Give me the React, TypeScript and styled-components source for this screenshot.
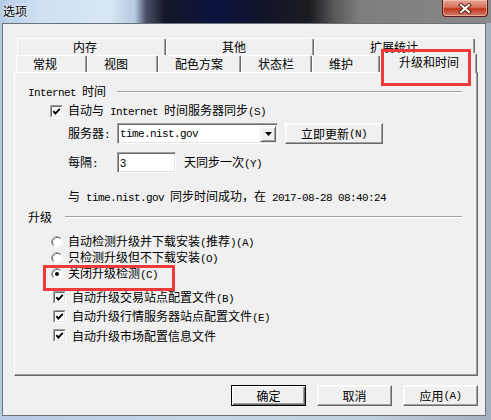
import styled, { createGlobalStyle } from "styled-components";

const GlobalStyle = createGlobalStyle`
  html, body {
    margin: 0;
    padding: 0;
    background: #ffffff;
  }
  body {
    font-family: "Noto Sans CJK SC", "Noto Sans", sans-serif;
    font-size: 12px;
    color: #000000;
  }
`;

const Frame = styled.div`
  width: 491px;
  height: 420px;
  box-sizing: border-box;
  display: flex;
  flex-direction: column;
  overflow: hidden;
  background: linear-gradient(90deg, #b6cbe3 0%, #c6d6e8 40%, #c2cfdc 75%, #a4b0bd 100%);
`;

const TitleBar = styled.div`
  height: 23px;
  flex: none;
  display: flex;
  align-items: flex-start;
  padding-left: 3px;
  background: linear-gradient(
    90deg,
    #b4cce6 0px,
    #cfe0f2 40px,
    #d9e6f4 110px,
    #b5c9e0 135px,
    #4a5068 146px,
    #141826 165px,
    #0d1240 215px,
    #10142a 260px,
    #1c1c22 310px,
    #5a5a5a 335px,
    #7d7d7d 360px,
    #8a8a8a 491px
  );
`;

const Title = styled.div`
  margin-top: 4px;
  line-height: 14px;
  font-size: 12px;
  text-shadow: 0 0 4px #ffffff, 0 0 2px #ffffff;
`;

const CloseButton = styled.div`
  margin-left: auto;
  margin-right: 3px;
  width: 46px;
  height: 17px;
  box-sizing: border-box;
  border: 1px solid #5a1c14;
  border-top: none;
  border-radius: 0 0 4px 4px;
  background: linear-gradient(180deg, #e8a494 0%, #d5725c 45%, #c0381f 55%, #d4806a 100%);
  box-shadow: inset 0 0 0 1px rgba(255, 220, 210, 0.45);
  display: flex;
  align-items: center;
  justify-content: center;
`;

const Client = styled.div`
  flex: 1;
  margin: 0 5px 4px 2px;
  display: flex;
  flex-direction: column;
  background: #f0f0f0;
  border: 1px solid #6a737c;
  padding: 14px 7px 0 11px;
`;

const TabStrip = styled.div`
  display: flex;
  flex-direction: column;
  height: 34px;
`;

const TabRow = styled.div<{ $indent: number }>`
  display: flex;
  align-items: flex-end;
  height: 17px;
  padding-left: ${(p) => p.$indent}px;
`;

const Tab = styled.div<{ $w: number; $pad: number; $active?: boolean }>`
  position: relative;
  width: ${(p) => p.$w}px;
  height: ${(p) => (p.$active ? 20 : 17)}px;
  margin-bottom: ${(p) => (p.$active ? -1 : 0)}px;
  z-index: ${(p) => (p.$active ? 2 : 0)};
  box-sizing: border-box;
  padding-left: ${(p) => p.$pad}px;
  background: #f0f0f0;
  border-top: 1px solid #ffffff;
  border-left: 1px solid #ffffff;
  border-right: 1px solid #696969;
  border-radius: 2px 2px 0 0;
  box-shadow: inset -1px 0 #a0a0a0;
  line-height: 15px;
  white-space: nowrap;
  flex: none;
`;

const Mark = styled.div<{ $l: number; $t: number; $w: number; $h: number }>`
  position: absolute;
  left: ${(p) => p.$l}px;
  top: ${(p) => p.$t}px;
  width: ${(p) => p.$w}px;
  height: ${(p) => p.$h}px;
  box-sizing: border-box;
  border: 3px solid #ef3a3a;
  pointer-events: none;
  z-index: 5;
`;

const Panel = styled.div`
  height: 304px;
  box-sizing: border-box;
  padding: 12px 15px 0 13px;
  border: 1px solid;
  border-color: #ffffff #696969 #696969 #ffffff;
  box-shadow: inset -1px -1px #a0a0a0;
  display: flex;
  flex-direction: column;
`;

const GroupHeader = styled.div<{ $gap: number; $mt?: number }>`
  display: flex;
  align-items: center;
  height: 14px;
  gap: ${(p) => p.$gap}px;
  margin-top: ${(p) => p.$mt ?? 0}px;
  line-height: 14px;
`;

const Rule = styled.div`
  flex: 1;
  height: 0;
  border-top: 1px solid #a0a0a0;
  border-bottom: 1px solid #ffffff;
`;

const Mono = styled.span`
  font-family: "Liberation Mono", "DejaVu Sans Mono", monospace;
  font-size: 11px;
  letter-spacing: -0.6px;
  white-space: pre;
`;

const Section = styled.div<{ $ml: number; $mt: number }>`
  display: flex;
  flex-direction: column;
  margin-left: ${(p) => p.$ml}px;
  margin-top: ${(p) => p.$mt}px;
`;

const OptionRow = styled.div<{ $h: number; $gap: number; $mt?: number }>`
  position: relative;
  display: flex;
  align-items: center;
  height: ${(p) => p.$h}px;
  gap: ${(p) => p.$gap}px;
  margin-top: ${(p) => p.$mt ?? 0}px;
  line-height: 14px;
  white-space: nowrap;
`;

const FieldRow = styled.div<{ $mt: number }>`
  display: flex;
  align-items: center;
  height: 21px;
  margin-top: ${(p) => p.$mt}px;
  line-height: 14px;
  white-space: nowrap;
`;

const FieldLabel = styled.div`
  width: 49px;
  flex: none;
`;

const Sunken = styled.div<{ $w: number }>`
  width: ${(p) => p.$w}px;
  height: 21px;
  box-sizing: border-box;
  flex: none;
  display: flex;
  align-items: center;
  padding-left: 2px;
  background: #ffffff;
  border: 1px solid;
  border-color: #a0a0a0 #ffffff #ffffff #a0a0a0;
  box-shadow: inset 1px 1px #696969, inset -1px -1px #e3e3e3;
`;

const DropButton = styled.div`
  margin-left: auto;
  margin-right: 1px;
  width: 16px;
  height: 16px;
  box-sizing: border-box;
  background: #f0f0f0;
  border: 1px solid;
  border-color: #f0f0f0 #696969 #696969 #f0f0f0;
  box-shadow: inset 1px 1px #ffffff, inset -1px -1px #a0a0a0;
  display: flex;
  align-items: center;
  justify-content: center;
`;

const Button = styled.div<{ $w: number; $ml?: number; $default?: boolean }>`
  width: ${(p) => p.$w}px;
  height: 21px;
  margin-left: ${(p) => p.$ml ?? 0}px;
  box-sizing: border-box;
  flex: none;
  display: flex;
  align-items: center;
  justify-content: center;
  background: #f0f0f0;
  border: 1px solid;
  border-color: ${(p) =>
    p.$default ? "#000000" : "#ffffff #696969 #696969 #ffffff"};
  box-shadow: ${(p) =>
    p.$default
      ? "inset 1px 1px #ffffff, inset -1px -1px #696969, inset -2px -2px #a0a0a0"
      : "inset -1px -1px #a0a0a0, inset 1px 1px #f8f8f8"};
  line-height: 14px;
  white-space: nowrap;
`;

const ButtonRow = styled.div`
  display: flex;
  justify-content: flex-end;
  gap: 11px;
  margin-top: 9px;
`;

const CheckBox = () => (
  <svg width="13" height="13" viewBox="0 0 13 13" style={{ flex: "none" }}>
    <rect x="0" y="0" width="13" height="13" fill="#ffffff" />
    <path d="M0.5 12.5 V0.5 H12.5" fill="none" stroke="#a0a0a0" />
    <path d="M1.5 11.5 V1.5 H11.5" fill="none" stroke="#696969" />
    <path d="M1 12.5 H12.5 V1" fill="none" stroke="#ffffff" />
    <path d="M2 11.5 H11.5 V2" fill="none" stroke="#e3e3e3" />
    <path d="M3.3 6.2 L5.4 8.5 L9.8 3.9" fill="none" stroke="#000000" strokeWidth="1.9" />
  </svg>
);

const Radio = ({ on }: { on?: boolean }) => (
  <svg width="12" height="12" viewBox="0 0 12 12" style={{ flex: "none" }}>
    <circle cx="6" cy="6" r="5.5" fill="#ffffff" stroke="#f4f4f4" />
    <path d="M2.11 9.89 A5.5 5.5 0 0 1 9.89 2.11" fill="none" stroke="#a0a0a0" />
    <path d="M2.82 9.18 A4.5 4.5 0 0 1 9.18 2.82" fill="none" stroke="#696969" />
    {on && <circle cx="6" cy="6" r="2" fill="#000000" />}
  </svg>
);

const DownArrow = () => (
  <svg width="7" height="4" viewBox="0 0 7 4">
    <polygon points="0,0 7,0 3.5,4" fill="#000000" />
  </svg>
);

const CloseGlyph = () => (
  <svg width="14" height="11" viewBox="0 0 14 11">
    <path d="M3 2 L11 9 M11 2 L3 9" stroke="#5a2318" strokeWidth="4" strokeLinecap="square" />
    <path d="M3 2 L11 9 M11 2 L3 9" stroke="#ffffff" strokeWidth="2" strokeLinecap="square" />
  </svg>
);

const backTabs = [
  { label: "内存", w: 149 },
  { label: "其他", w: 148 },
  { label: "扩展统计", w: 161 },
];

const frontTabs = [
  { label: "常规", w: 71 },
  { label: "视图", w: 71 },
  { label: "配色方案", w: 83 },
  { label: "状态栏", w: 71 },
  { label: "维护", w: 68 },
];

export default function App() {
  return (
    <>
      <GlobalStyle />
      <Frame>
        <TitleBar>
          <Title>选项</Title>
          <CloseButton>
            <CloseGlyph />
          </CloseButton>
        </TitleBar>
        <Client>
          <TabStrip>
            <TabRow $indent={3}>
              {backTabs.map((t) => (
                <Tab key={t.label} $w={t.w} $pad={55}>
                  {t.label}
                </Tab>
              ))}
            </TabRow>
            <TabRow $indent={2}>
              {frontTabs.map((t) => (
                <Tab key={t.label} $w={t.w} $pad={16}>
                  {t.label}
                </Tab>
              ))}
              <Tab $w={97} $pad={18} $active>
                升级和时间
                <Mark $l={0} $t={-5} $w={90} $h={37} />
              </Tab>
            </TabRow>
          </TabStrip>

          <Panel>
            <GroupHeader $gap={11}>
              <span>
                <Mono>Internet </Mono>时间
              </span>
              <Rule />
            </GroupHeader>
            <Section $ml={22} $mt={5}>
              <OptionRow $h={14} $gap={5}>
                <CheckBox />
                <span>
                  自动与<Mono> Internet </Mono>时间服务器同步<Mono>(S)</Mono>
                </span>
              </OptionRow>
              <Section $ml={18} $mt={5}>
                <FieldRow $mt={0}>
                  <FieldLabel>
                    服务器<Mono>:</Mono>
                  </FieldLabel>
                  <Sunken $w={161}>
                    <Mono>time.nist.gov</Mono>
                    <DropButton>
                      <DownArrow />
                    </DropButton>
                  </Sunken>
                  <Button $w={98} $ml={7}>
                    立即更新<Mono>(N)</Mono>
                  </Button>
                </FieldRow>
                <FieldRow $mt={8}>
                  <FieldLabel>
                    每隔<Mono>:</Mono>
                  </FieldLabel>
                  <Sunken $w={59}>
                    <span style={{ fontFamily: "Liberation Sans, sans-serif", fontSize: 11 }}>3</span>
                  </Sunken>
                  <span style={{ marginLeft: 8 }}>
                    天同步一次<Mono>(Y)</Mono>
                  </span>
                </FieldRow>
                <OptionRow $h={14} $gap={0} $mt={17}>
                  <span>
                    与<Mono> time.nist.gov </Mono>同步时间成功，在<Mono> 2017-08-28 08:40:24</Mono>
                  </span>
                </OptionRow>
              </Section>
            </Section>

            <GroupHeader $gap={13} $mt={6}>
              <span>升级</span>
              <Rule />
            </GroupHeader>
            <Section $ml={23} $mt={10}>
              <OptionRow $h={16} $gap={5}>
                <Radio />
                <span>
                  自动检测升级并下载安装<Mono>(</Mono>推荐<Mono>)(A)</Mono>
                </span>
              </OptionRow>
              <OptionRow $h={16} $gap={5}>
                <Radio />
                <span>
                  只检测升级但不下载安装<Mono>(O)</Mono>
                </span>
              </OptionRow>
              <OptionRow $h={16} $gap={5}>
                <Radio on />
                <span>
                  关闭升级检测<Mono>(C)</Mono>
                </span>
                <Mark $l={-8} $t={-1} $w={132} $h={26} />
              </OptionRow>
            </Section>
            <Section $ml={25} $mt={6}>
              <OptionRow $h={19} $gap={6}>
                <CheckBox />
                <span>
                  自动升级交易站点配置文件<Mono>(B)</Mono>
                </span>
              </OptionRow>
              <OptionRow $h={19} $gap={6}>
                <CheckBox />
                <span>
                  自动升级行情服务器站点配置文件<Mono>(E)</Mono>
                </span>
              </OptionRow>
              <OptionRow $h={19} $gap={6}>
                <CheckBox />
                <span>自动升级市场配置信息文件</span>
              </OptionRow>
            </Section>
          </Panel>

          <ButtonRow>
            <Button $w={75} $default>
              确定
            </Button>
            <Button $w={75}>取消</Button>
            <Button $w={75}>
              应用<Mono>(A)</Mono>
            </Button>
          </ButtonRow>
        </Client>
      </Frame>
    </>
  );
}
